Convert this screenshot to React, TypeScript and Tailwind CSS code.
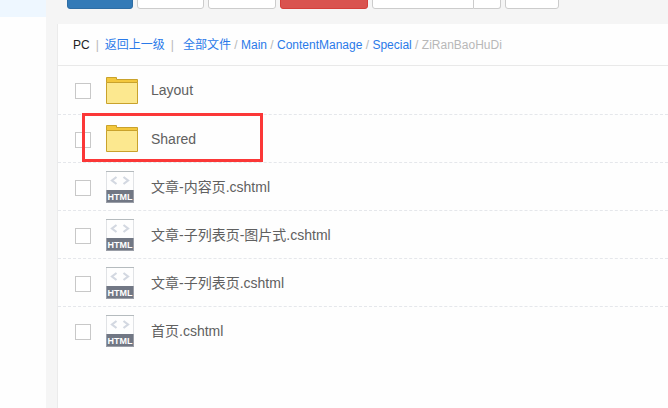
import { useState } from 'react'

type FileEntry = {
  name: string
  kind: 'folder' | 'html'
  marked?: boolean
}

const crumbs = ['全部文件', 'Main', 'ContentManage', 'Special']

const files: FileEntry[] = [
  { name: 'Layout', kind: 'folder' },
  { name: 'Shared', kind: 'folder', marked: true },
  { name: '文章-内容页.cshtml', kind: 'html' },
  { name: '文章-子列表页-图片式.cshtml', kind: 'html' },
  { name: '文章-子列表页.cshtml', kind: 'html' },
  { name: '首页.cshtml', kind: 'html' },
]

function FolderIcon() {
  return (
    <svg width="32" height="27" viewBox="0 0 32 27" aria-hidden="true">
      <path d="M0.5 5.5V0.5H10.5V2.5H31.5V5.5Z" fill="#f3c73c" stroke="#c9a22c" />
      <path d="M0.5 5.5H31.5V26.5H0.5Z" fill="#fce88f" stroke="#c9a22c" />
    </svg>
  )
}

function HtmlIcon() {
  return (
    <svg width="28" height="32" viewBox="0 0 28 32" aria-hidden="true">
      <path d="M0.5 0.5H27.5V20H0.5Z" fill="#fefefe" stroke="#e1e3e6" />
      <path d="M0 0.5H28" stroke="#b5bbbe" />
      <path d="M10.5 6L6 9.5L10.5 13M17.5 6L22 9.5L17.5 13" fill="none" stroke="#d3d8e1" strokeWidth="2.2" />
      <path d="M0 19H28V32H0Z" fill="#717784" />
      <path d="M0 31.5H28M0.5 19V32M27.5 19V32" stroke="#9a9ea7" />
      <text x="14" y="29" textAnchor="middle" fontSize="9" fontWeight="bold" fill="#fff">
        HTML
      </text>
    </svg>
  )
}

function Toolbar() {
  return (
    <div className="flex h-[9px] items-end gap-1 overflow-hidden pl-[10px]">
      <button type="button" aria-label="上传" className="h-8 w-[66px] shrink-0 rounded-[3px] border border-[#2e6da4] bg-[#337ab7]" />
      <button type="button" aria-label="新建文件夹" className="h-8 w-[67px] shrink-0 rounded-[3px] border border-[#ccc] bg-white" />
      <button type="button" aria-label="新建文件" className="h-8 w-[68px] shrink-0 rounded-[3px] border border-[#ccc] bg-white" />
      <button type="button" aria-label="删除" className="h-8 w-[88px] shrink-0 rounded-[3px] border border-[#d43f3a] bg-[#d9534f]" />
      <div className="flex shrink-0">
        <button type="button" aria-label="更多操作" className="h-8 w-[102px] rounded-l-[3px] border border-[#ccc] bg-white" />
        <button type="button" aria-label="展开菜单" className="h-8 w-[27px] rounded-r-[3px] border border-l-0 border-[#ccc] bg-white" />
      </div>
      <button type="button" aria-label="刷新" className="h-8 w-[54px] shrink-0 rounded-[3px] border border-[#ccc] bg-white" />
    </div>
  )
}

function Breadcrumb() {
  return (
    <nav className="flex h-[42px] items-center whitespace-nowrap border-b border-[#e9e9e9] pl-[15px] text-xs text-[#b8b8b8]">
      <span className="text-[#222]">PC</span>
      <span className="px-[6px]">|</span>
      <a href="#up" className="text-[#2a7ae9]">返回上一级</a>
      <span className="pl-[6px] pr-[9px]">|</span>
      {crumbs.map((crumb) => (
        <span key={crumb} className="whitespace-pre">
          <a href={`#${crumb}`} className="text-[#2a7ae9]">{crumb}</a>
          {' / '}
        </span>
      ))}
      <span>ZiRanBaoHuDi</span>
    </nav>
  )
}

export default function App() {
  const [selected, setSelected] = useState<string[]>([])

  function toggle(name: string) {
    setSelected((current) => (current.includes(name) ? current.filter((n) => n !== name) : [...current, name]))
  }

  return (
    <div className="flex min-h-screen bg-[#f5f5f5] font-['Liberation_Sans','Noto_Sans_CJK_SC',sans-serif]">
      <aside className="w-[46px] shrink-0 bg-[#fefefe]">
        <div className="h-[17px] bg-[#eef7ff]" />
      </aside>
      <main className="ml-[11px] flex min-w-0 flex-1 flex-col gap-[15px]">
        <Toolbar />
        <section className="flex-1 border-l border-[#ebebeb] bg-[#fefefe]">
          <Breadcrumb />
          <ul>
            {files.map((file) => (
              <li
                key={file.name}
                className="relative h-12 border-b border-dashed border-[#e5e7eb] pt-[2px] first:h-[49px] last:border-b-0"
              >
                <label className="flex h-full items-center pl-[17px] text-sm text-[#606060]">
                  <input
                    type="checkbox"
                    checked={selected.includes(file.name)}
                    onChange={() => toggle(file.name)}
                    className="size-4 shrink-0 appearance-none border border-[#c8c8c8] bg-white checked:bg-[#2a7ae9]"
                  />
                  <span className="ml-[15px] w-[45px] shrink-0 pb-[2px]">
                    {file.kind === 'folder' ? <FolderIcon /> : <HtmlIcon />}
                  </span>
                  <span className="pb-[2px]">{file.name}</span>
                </label>
                {file.marked && (
                  <div className="pointer-events-none absolute -top-[2px] left-6 h-[49px] w-[181px] border-3 border-[#fb3737]" />
                )}
              </li>
            ))}
          </ul>
        </section>
      </main>
    </div>
  )
}
